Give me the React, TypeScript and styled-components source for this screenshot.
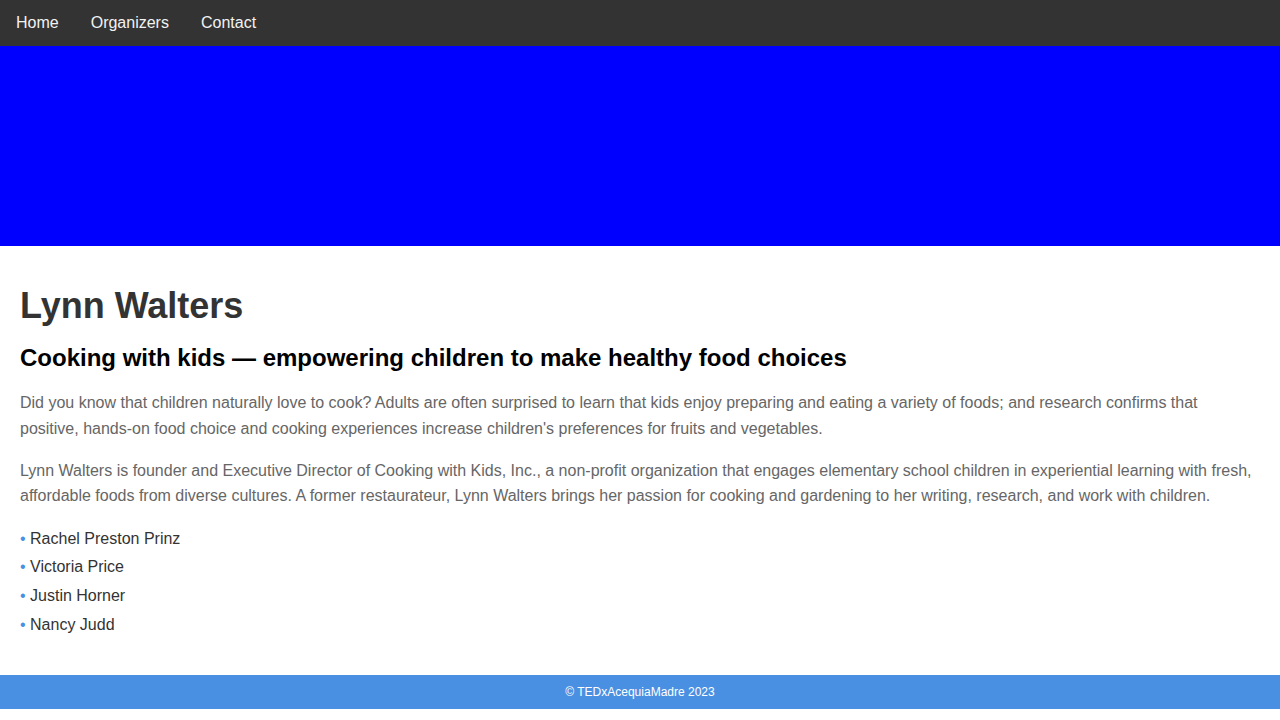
import styled, { createGlobalStyle } from 'styled-components';

const GlobalStyle = createGlobalStyle`
  body {
    margin: 0;
    font-family: "Liberation Sans", Arial, sans-serif;
    background: #fff;
  }
`;

const Nav = styled.nav`
  display: flex;
  background: #333;
`;

const NavLink = styled.a`
  display: block;
  padding: 14px 16px;
  font-size: 16px;
  line-height: 18.4px;
  color: #f2f2f2;
  text-decoration: none;
`;

const Hero = styled.div`
  height: 200px;
  background: #0000ff;
`;

const Main = styled.main`
  padding: 39px 20px 19px;
`;

const Name = styled.h1`
  margin: 0 0 17px;
  font-size: 36px;
  font-weight: 700;
  color: #333;
`;

const Talk = styled.h2`
  margin: 0 0 18px;
  font-size: 24px;
  font-weight: 700;
  color: #000;
`;

const Text = styled.p`
  margin: 16px 0;
  font-size: 16px;
  line-height: 1.6;
  color: #666;
`;

const List = styled.ul`
  margin: 16px 0;
  padding: 0;
  list-style: none;
`;

const Item = styled.li`
  font-size: 16px;
  line-height: 28.7px;
  color: #333;

  &::before {
    content: '• ';
    color: #4a90e2;
  }
`;

const Footer = styled.footer`
  padding: 10px;
  background: #4a90e2;
  color: #fff;
  font-size: 12px;
  text-align: center;
`;

const speakers = ['Rachel Preston Prinz', 'Victoria Price', 'Justin Horner', 'Nancy Judd'];

export default function App() {
  return (
    <>
      <GlobalStyle />
      <Nav>
        <NavLink href="#">Home</NavLink>
        <NavLink href="#">Organizers</NavLink>
        <NavLink href="#">Contact</NavLink>
      </Nav>
      <Hero />
      <Main>
        <Name>Lynn Walters</Name>
        <Talk>Cooking with kids — empowering children to make healthy food choices</Talk>
        <Text>
          Did you know that children naturally love to cook? Adults are often surprised to learn that kids enjoy
          preparing and eating a variety of foods; and research confirms that positive, hands-on food choice and
          cooking experiences increase children's preferences for fruits and vegetables.
        </Text>
        <Text>
          Lynn Walters is founder and Executive Director of Cooking with Kids, Inc., a non-profit organization that
          engages elementary school children in experiential learning with fresh, affordable foods from diverse
          cultures. A former restaurateur, Lynn Walters brings her passion for cooking and gardening to her writing,
          research, and work with children.
        </Text>
        <List>
          {speakers.map((s) => (
            <Item key={s}>{s}</Item>
          ))}
        </List>
      </Main>
      <Footer>© TEDxAcequiaMadre 2023</Footer>
    </>
  );
}
